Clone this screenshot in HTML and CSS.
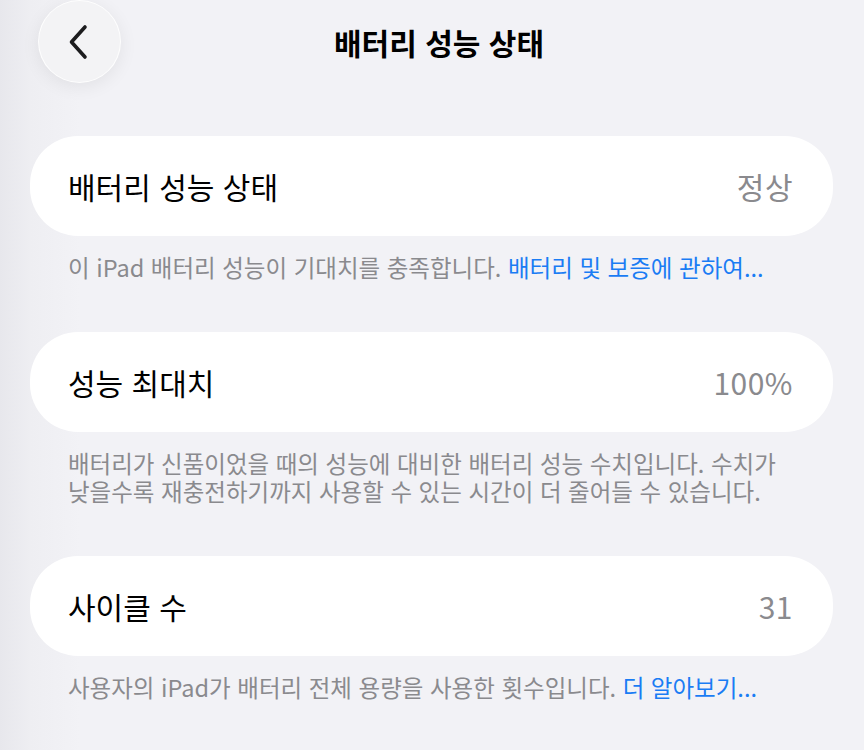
FILE: index.html
```html
<!DOCTYPE html>
<html lang="ko">
<head>
<meta charset="utf-8">
<title>배터리 성능 상태</title>
<link rel="stylesheet" href="styles.css">
</head>
<body>
<div class="page">
  <header class="nav">
    <button class="back" aria-label="뒤로">
      <svg width="24" height="40" viewBox="0 0 24 40" class="chev">
        <path d="M19 5 L5.5 20 L19 35" fill="none" stroke="#1c1c1e" stroke-width="3.6" stroke-linecap="round" stroke-linejoin="round"/>
      </svg>
    </button>
    <h1 class="title">배터리 성능 상태</h1>
    <div class="spacer"></div>
  </header>

  <main class="content">
    <section class="group">
      <div class="card">
        <span class="label">배터리 성능 상태</span>
        <span class="value">정상</span>
      </div>
      <p class="footer">이 iPad 배터리 성능이 기대치를 충족합니다. <a class="link">배터리 및 보증에 관하여...</a></p>
    </section>

    <section class="group">
      <div class="card">
        <span class="label">성능 최대치</span>
        <span class="value">100%</span>
      </div>
      <p class="footer">배터리가 신품이었을 때의 성능에 대비한 배터리 성능 수치입니다. 수치가<br>낮을수록 재충전하기까지 사용할 수 있는 시간이 더 줄어들 수 있습니다.</p>
    </section>

    <section class="group">
      <div class="card">
        <span class="label">사이클 수</span>
        <span class="value">31</span>
      </div>
      <p class="footer">사용자의 iPad가 배터리 전체 용량을 사용한 횟수입니다. <a class="link">더 알아보기...</a></p>
    </section>
  </main>
</div>
</body>
</html>
```

FILE: styles.css
```css
* { box-sizing: border-box; }

html, body {
  margin: 0;
  padding: 0;
  height: 100%;
}

body {
  font-family: "Noto Sans CJK KR", "Noto Sans", sans-serif;
  background: linear-gradient(90deg, #e7e7ec 0px, #eeeef2 30px, #f2f2f6 80px, #f2f2f6 100%);
  color: #000;
  overflow: hidden;
}

.page {
  width: 864px;
  height: 750px;
}

.nav {
  height: 83px;
  display: grid;
  grid-template-columns: 1fr auto 1fr;
  align-items: center;
}

.back {
  justify-self: start;
  margin-left: 38px;
  width: 83px;
  height: 83px;
  border-radius: 50%;
  border: 1px solid rgba(255,255,255,0.9);
  background: #f3f3f5;
  box-shadow: 0 4px 18px rgba(0,0,0,0.07);
  display: flex;
  align-items: center;
  justify-content: center;
  padding: 0;
  cursor: pointer;
}

.chev {
  display: block;
  margin-left: -4px;
}

.title {
  margin: 0;
  padding-left: 14px;
  font-size: 30px;
  font-weight: 700;
  line-height: 40px;
  color: #000;
}

.content {
  padding: 53px 31px 0 30px;
}

.group {
  margin-bottom: 51px;
}

.card {
  height: 100px;
  background: #ffffff;
  border-radius: 48px;
  display: flex;
  align-items: center;
  justify-content: space-between;
  padding: 0 40px 0 38px;
}

.label {
  font-size: 30px;
  color: #000;
}

.value {
  font-size: 30px;
  color: #8a8a8e;
  letter-spacing: 0.5px;
}

.footer {
  margin: 0;
  padding: 17px 0 0 38px;
  font-size: 23.5px;
  line-height: 28px;
  color: #8a8a8e;
}

.link {
  color: #1a7cf4;
  text-decoration: none;
}
```
